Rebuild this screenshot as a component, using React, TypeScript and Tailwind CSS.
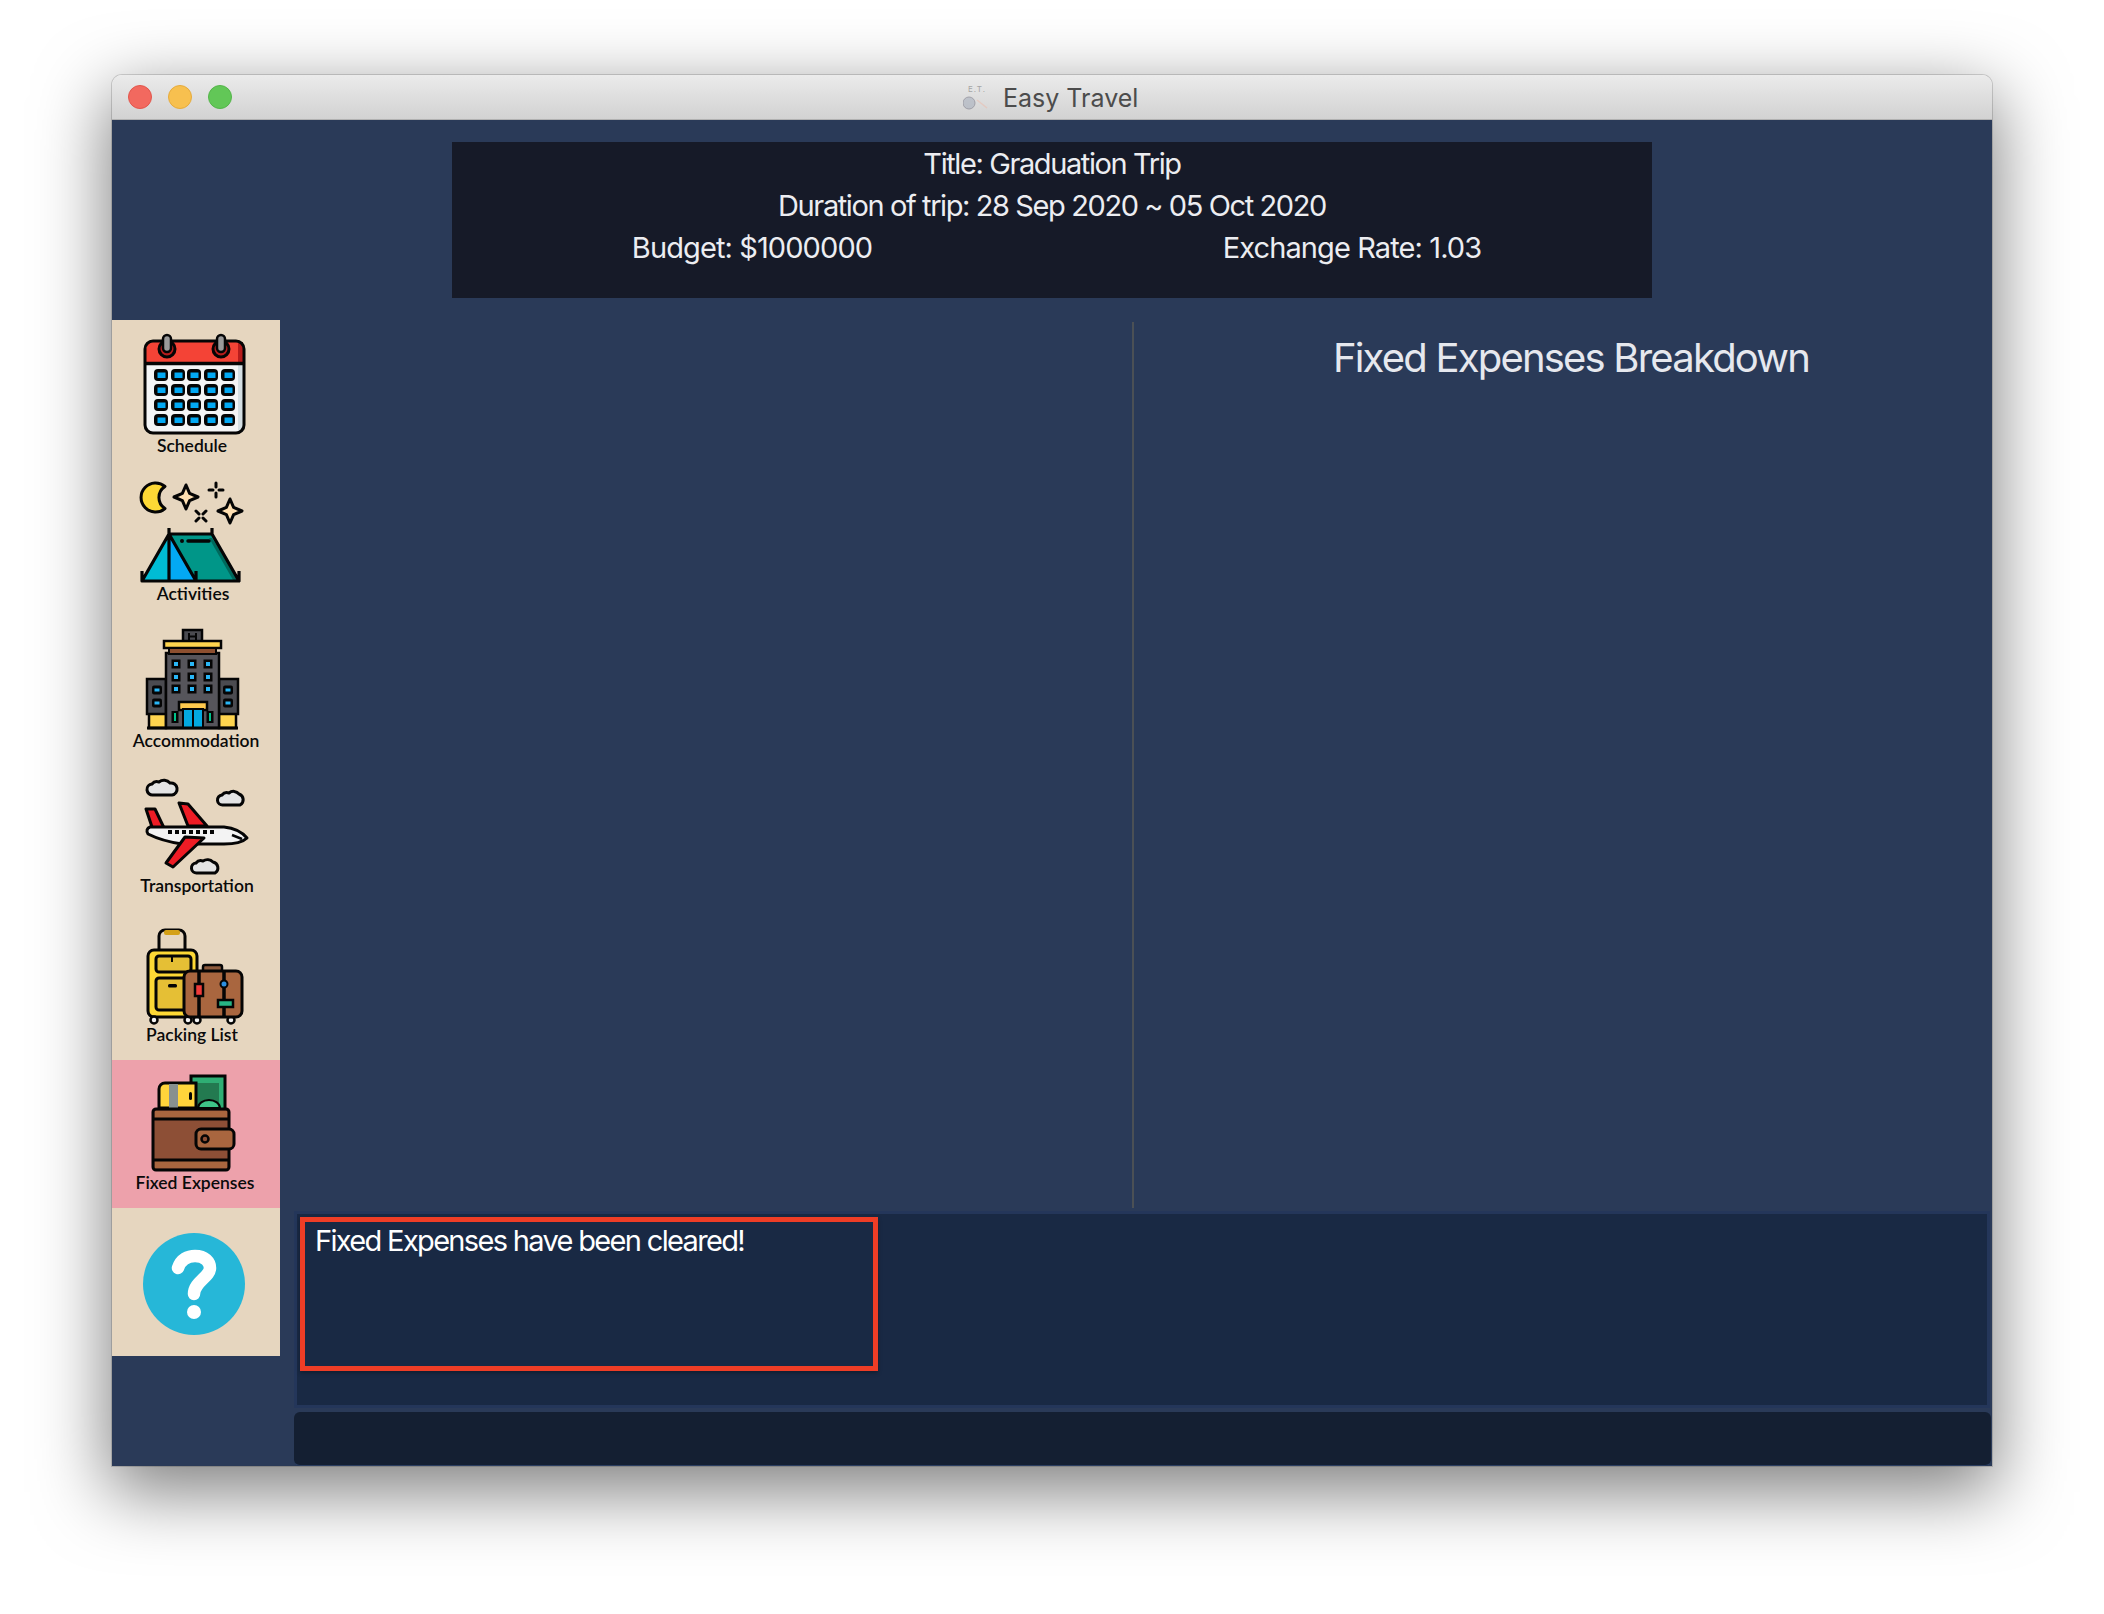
import React from "react"

const K = "#050505"

function CalendarIcon() {
  const cols = [49, 66, 82, 99, 116]
  const rows = [55, 70, 85, 100]
  return (
    <svg viewBox="0 0 168 116" className="w-[168px] h-[116px]">
      <rect x="34" y="22" width="97" height="91" rx="7" fill="#f4f5f6" />
      <rect x="126" y="44" width="5" height="68" fill="#d5dfe3" />
      <path d="M34 43V29a7 7 0 0 1 7-7h83a7 7 0 0 1 7 7v14z" fill="#f44336" />
      <path d="M126 22h5v21h-5z" fill="#b71c1c" />
      <rect x="33" y="21" width="99" height="92" rx="8" fill="none" stroke={K} strokeWidth="3" />
      <path d="M33 43.500h99" stroke={K} strokeWidth="3.500" />
      {[55, 109].map(x => (
        <g key={x}>
          <circle cx={x} cy="29" r="8" fill="#b71c1c" stroke={K} strokeWidth="3" />
          <rect x={x - 4} y="15" width="8" height="17" rx="4" fill="#9a9a9a" stroke={K} strokeWidth="2.500" />
        </g>
      ))}
      {rows.map(y =>
        cols.map(x => (
          <g key={`${x}-${y}`}>
            <rect x={x - 7} y={y - 6} width="14" height="12" rx="4" fill={K} />
            <rect x={x - 3.500} y={y - 2.500} width="8" height="5.500" fill="#03a9f4" />
          </g>
        ))
      )}
    </svg>
  )
}

function Sparkle({ x, y, r, fill }: { x: number; y: number; r: number; fill: string }) {
  const w = r * 0.3
  return (
    <path
      d={`M${x} ${y - r}L${x + w} ${y - w}L${x + r} ${y}L${x + w} ${y + w}L${x} ${y + r}L${x - w} ${y + w}L${x - r} ${y}L${x - w} ${y - w}Z`}
      fill={fill}
      stroke={K}
      strokeWidth="3"
      strokeLinejoin="round"
    />
  )
}

function TentIcon() {
  return (
    <svg viewBox="0 0 168 116" className="w-[168px] h-[116px]">
      <path d="M53 18.500a14.500 14.500 0 1 0 0 22a13 13 0 0 1 0-22z" fill="#fdd835" stroke={K} strokeWidth="3" strokeLinejoin="round" />
      <Sparkle x={74} y={29} r={12} fill="#ffe0b2" />
      <Sparkle x={118} y={43} r={12} fill="#ffe0b2" />
      <path d="M104 15v4M104 25v4M97 22h4M107 22h4M84 43l3 3M94 43l-3 3M84 53l3-3M94 53l-3-3" stroke={K} strokeWidth="3" strokeLinecap="round" />
      <path d="M57 66H100L127 112H83z" fill="#009688" />
      <path d="M121 112l-24-42h3l27 42z" fill="#00695c" />
      <path d="M57 66L30 112H57z" fill="#00bcd4" />
      <path d="M57 66L84 112H57z" fill="#03a9f4" />
      <path d="M57 66H100L127 113H30zM57 66L84 113M57 60V113M100 60V66M30 103V113M84 103V113M127 103V113" fill="none" stroke={K} strokeWidth="3.200" strokeLinejoin="round" />
      <path d="M76 73H97" stroke={K} strokeWidth="3.500" strokeLinecap="round" />
      <circle cx="70" cy="73" r="2" fill={K} />
    </svg>
  )
}

function HotelIcon() {
  const xs = [64, 80, 96]
  const ys = [48, 61, 73]
  return (
    <svg viewBox="0 0 168 116" className="w-[168px] h-[116px]">
      <rect x="37" y="95" width="17" height="17" fill="#ffd54f" stroke={K} strokeWidth="2.500" />
      <rect x="107" y="95" width="17" height="17" fill="#ffd54f" stroke={K} strokeWidth="2.500" />
      <rect x="35" y="63" width="19" height="35" fill="#4b4b50" stroke={K} strokeWidth="2.500" />
      <rect x="107" y="63" width="19" height="35" fill="#4b4b50" stroke={K} strokeWidth="2.500" />
      <rect x="54" y="37" width="53" height="75" fill="#56555b" stroke={K} strokeWidth="2.500" />
      <rect x="71" y="14" width="19" height="14" fill="#4b4b50" stroke={K} strokeWidth="2.500" />
      <path d="M77 17v7M84 17v7M77 20.500h7" stroke={K} strokeWidth="2" />
      <rect x="52" y="25" width="57" height="7" fill="#ffd54f" stroke={K} strokeWidth="2.500" />
      <rect x="57" y="32" width="47" height="6" fill="#8d4f2f" stroke={K} strokeWidth="2" />
      {ys.map(y =>
        xs.map(x => (
          <g key={`${x}-${y}`}>
            <rect x={x - 4.500} y={y - 4.500} width="9" height="9" fill={K} />
            <rect x={x - 2} y={y - 2} width="4" height="4" fill="#29b6f6" />
          </g>
        ))
      )}
      {[45, 116].map(x =>
        [74, 87].map(y => (
          <g key={`${x}-${y}`}>
            <rect x={x - 5} y={y - 4.500} width="10" height="9" rx="2" fill={K} />
            <rect x={x - 2.500} y={y - 1.500} width="5" height="3" fill="#29b6f6" />
          </g>
        ))
      )}
      <rect x="67" y="86" width="28" height="8" fill="#ffc94d" stroke={K} strokeWidth="2.500" />
      <rect x="71" y="93" width="20" height="19" fill="#03a9e0" stroke={K} strokeWidth="2" />
      <path d="M81 93v19" stroke={K} strokeWidth="2" />
      {[63, 98].map(x => (
        <g key={x}>
          <rect x={x - 3.500} y="95" width="7" height="12" fill={K} />
          <rect x={x - 1} y="97" width="2" height="8" fill="#00c38a" />
        </g>
      ))}
      <path d="M35 112H126" stroke={K} strokeWidth="3" />
    </svg>
  )
}

function Cloud({ d }: { d: string }) {
  return <path d={d} fill="#e4e4e4" stroke={K} strokeWidth="3" strokeLinejoin="round" />
}

function PlaneIcon() {
  return (
    <svg viewBox="0 0 168 116" className="w-[168px] h-[116px]">
      <Cloud d="M41 31a5 5 0 0 1-1-11a6 6 0 0 1 7-2a8 8 0 0 1 11 1a6 6 0 0 1 2 12z" />
      <Cloud d="M111 41a5 5 0 0 1-1-10a6 6 0 0 1 7-2a7 7 0 0 1 10 1a6 6 0 0 1 1 11z" />
      <Cloud d="M85 109a5 5 0 0 1-1-10a6 6 0 0 1 7-2a8 8 0 0 1 10 1a6 6 0 0 1 2 11z" />
      <path d="M34 45L43 45L53 66H41z" fill="#ee1c25" stroke={K} strokeWidth="3" strokeLinejoin="round" />
      <path d="M67 39L76 40L95 62H76z" fill="#ee1c25" stroke={K} strokeWidth="3" strokeLinejoin="round" />
      <path d="M38 63L112 63C122 64 130 68 135 74C130 79 122 80 112 80L70 80C56 78 44 74 36 70C34 67 35 64 38 63z" fill="#f3f3f3" stroke={K} strokeWidth="3" strokeLinejoin="round" />
      <path d="M120 71L130 75" stroke={K} strokeWidth="2.500" />
      {[56, 63, 70, 77, 84, 91, 98].map(x => (
        <rect key={x} x={x} y="66" width="4" height="4" fill={K} />
      ))}
      <path d="M73 73L92 74L61 103L54 99z" fill="#ee1c25" stroke={K} strokeWidth="3" strokeLinejoin="round" />
    </svg>
  )
}

function LuggageIcon() {
  return (
    <svg viewBox="0 0 168 116" className="w-[168px] h-[116px]">
      <path d="M47 38V24a6 6 0 0 1 6-6h14a6 6 0 0 1 6 6v14" fill="none" stroke={K} strokeWidth="3" />
      <rect x="52" y="18" width="16" height="5" rx="2" fill="#d4a017" />
      <rect x="36" y="38" width="49" height="67" rx="6" fill="#fdd835" stroke={K} strokeWidth="3" />
      <rect x="44" y="44" width="35" height="16" rx="3" fill="#e5bf35" stroke={K} strokeWidth="3" />
      <rect x="44" y="66" width="32" height="32" rx="3" fill="#e5bf35" stroke={K} strokeWidth="3" />
      <path d="M60 45v5" stroke={K} strokeWidth="2" />
      <rect x="56" y="72" width="9" height="3.500" rx="1.500" fill={K} />
      {[42, 76, 85, 119].map(x => (
        <circle key={x} cx={x} cy="108" r="3.500" fill="#f3f3f3" stroke={K} strokeWidth="2.500" />
      ))}
      <rect x="91" y="53" width="19" height="7" rx="2" fill="#8d5a3c" stroke={K} strokeWidth="2.500" />
      <rect x="72" y="59" width="58" height="46" rx="6" fill="#a9663f" stroke={K} strokeWidth="3" />
      <path d="M87 59V105M112 59V105" stroke={K} strokeWidth="3.500" />
      <rect x="83" y="72" width="8" height="12" fill="#ef3b3b" stroke={K} strokeWidth="2.500" />
      <circle cx="112" cy="72" r="3.500" fill="#2d8fe0" stroke={K} strokeWidth="2" />
      <rect x="106" y="88" width="15" height="7" fill="#27b585" stroke={K} strokeWidth="2.500" />
    </svg>
  )
}

function WalletIcon() {
  return (
    <svg viewBox="0 0 168 116" className="w-[168px] h-[116px]">
      <rect x="79" y="16" width="34" height="34" fill="#2fae74" stroke={K} strokeWidth="3" />
      <rect x="85" y="23" width="22" height="25" fill="#237a50" />
      <path d="M86 48a11 8 0 0 1 22 0z" fill="#3ec488" stroke={K} strokeWidth="2" />
      <path d="M47 48V29a6 6 0 0 1 6-6h31V48z" fill="#ffd43b" stroke={K} strokeWidth="3" />
      <rect x="57" y="24" width="9" height="24" fill="#88908f" />
      <rect x="77" y="32" width="3" height="8" rx="1.500" fill={K} />
      <rect x="41" y="49" width="76" height="61" rx="3" fill="#8d4f36" stroke={K} strokeWidth="3" />
      <rect x="43" y="51" width="72" height="7" fill="#a9663f" />
      <rect x="43" y="101" width="72" height="7" fill="#a9663f" />
      <path d="M41 59H117M41 100H117" stroke={K} strokeWidth="3" />
      <rect x="84" y="69" width="38" height="20" rx="5" fill="#a9663f" stroke={K} strokeWidth="3" />
      <circle cx="93" cy="79" r="3.500" fill="#8d4f36" stroke={K} strokeWidth="2.500" />
    </svg>
  )
}

function HelpIcon() {
  return (
    <svg viewBox="0 0 168 148" className="w-[168px] h-[148px]">
      <circle cx="82" cy="76" r="51" fill="#26b7d8" />
      <path d="M66 60C69 51 76 48 83 48C93 48 98 54 98 60C98 69 82 74 82 86" fill="none" stroke="#fff" strokeWidth="12.500" strokeLinecap="round" strokeLinejoin="round" />
      <circle cx="82" cy="104" r="7" fill="#fff" />
    </svg>
  )
}

function NavItem({ icon, label, offset, active }: { icon: React.ReactNode; label: string; offset: string; active?: boolean }) {
  return (
    <div className={`h-[148px] flex flex-col items-center ${active ? "bg-[#eda1ab]" : ""}`}>
      {icon}
      <span className={`whitespace-nowrap text-[17.500px] leading-[20px] font-semibold text-[#0a0a0a] font-['Lato',sans-serif] ${offset}`}>
        {label}
      </span>
    </div>
  )
}

export default function App() {
  return (
    <div className="h-[1614px] bg-white pt-[75px] pl-[112px] overflow-hidden font-['Inter','Liberation_Sans',sans-serif]">
      <div className="w-[1880px] h-[1391px] flex flex-col rounded-t-[10px] shadow-[0_0_0_1px_rgba(0,0,0,0.15),0_22px_70px_4px_rgba(0,0,0,0.5)]">
        {/* Title bar */}
        <div className="h-[45px] shrink-0 flex items-center rounded-t-[10px] bg-gradient-to-b from-[#ebebeb] to-[#d2d2d2] border-b border-[#b1b1b1] pl-[16px]">
          <div className="flex gap-[16px]">
            <span className="w-[24px] h-[24px] rounded-full bg-[#f2695f] border border-[#e2564c]" />
            <span className="w-[24px] h-[24px] rounded-full bg-[#f7c04f] border border-[#e6ab3c]" />
            <span className="w-[24px] h-[24px] rounded-full bg-[#62c757] border border-[#54b54a]" />
          </div>
          <div className="flex items-center ml-[731px] pt-[2px]">
            <div className="w-[28px] h-[28px] flex flex-col items-center opacity-50">
              <span className="text-[8px] leading-[10px] text-[#666] tracking-[1px]">E.T.</span>
              <svg viewBox="0 0 28 18" className="w-[28px] h-[18px]">
                <circle cx="6" cy="9" r="6" fill="#9fa8b8" stroke="#667" strokeWidth="1" />
                <path d="M14 6l10 8" stroke="#eba" strokeWidth="1.500" />
              </svg>
            </div>
            <span className="ml-[12px] text-[25px] leading-none text-[#4c4c4c]">Easy Travel</span>
          </div>
        </div>

        {/* Body */}
        <div className="flex-1 flex flex-col bg-[#2a3a58] min-h-0">
          <div className="mx-auto mt-[22px] mb-[22px] w-[1200px] h-[156px] shrink-0 bg-[#161a28] text-[#ecedf1] text-[29px] leading-[42px] tracking-[-1.4px] text-center pt-[1px]">
            <div>Title: Graduation Trip</div>
            <div>Duration of trip: 28 Sep 2020 ~ 05 Oct 2020</div>
            <div className="grid grid-cols-2 tracking-[-0.9px]">
              <div>Budget: $1000000</div>
              <div>Exchange Rate: 1.03</div>
            </div>
          </div>

          <div className="flex-1 flex min-h-0">
            {/* Sidebar */}
            <div className="w-[168px] h-[1036px] shrink-0 bg-[#e6d6bf] flex flex-col">
              <NavItem icon={<CalendarIcon />} label="Schedule" offset="mr-[8px]" />
              <NavItem icon={<TentIcon />} label="Activities" offset="mr-[6px]" />
              <NavItem icon={<HotelIcon />} label="Accommodation" offset="-mt-[1px]" />
              <NavItem icon={<PlaneIcon />} label="Transportation" offset="ml-[2px] -mt-[4px]" />
              <NavItem icon={<LuggageIcon />} label="Packing List" offset="mr-[8px] -mt-[3px]" />
              <NavItem icon={<WalletIcon />} label="Fixed Expenses" offset="mr-[2px] -mt-[3px]" active />
              <HelpIcon />
            </div>

            {/* Main column */}
            <div className="flex-1 flex flex-col min-w-0">
              <div className="h-[891px] shrink-0 flex">
                <div className="w-[852px] shrink-0" />
                <div className="w-[2px] shrink-0 mt-[2px] mb-[3px] bg-[#4b5055]" />
                <div className="flex-1 pl-[16px] pt-[14px] text-center text-[40px] leading-[48px] tracking-[-1.8px] text-[#e6e8ee]">
                  Fixed Expenses Breakdown
                </div>
              </div>
              <div className="h-[197px] shrink-0 ml-[14px] mr-[2px] border-[3px] border-[#24365a] bg-[#192944] p-[3px]">
                <div className="w-[578px] h-[154px] border-[5px] border-[#ee3d26] pl-[10px] pt-[1px] shadow-[0_2px_4px_rgba(0,0,0,0.3)] text-white text-[29px] leading-[36px] tracking-[-1.67px]">
                  Fixed Expenses have been cleared!
                </div>
              </div>
              <div className="mt-[4px] h-[54px] shrink-0 ml-[14px] mr-[1px] rounded-[6px] bg-[#141f32] border-b border-[#2a3d60]" />
            </div>
          </div>
        </div>
      </div>
    </div>
  )
}
